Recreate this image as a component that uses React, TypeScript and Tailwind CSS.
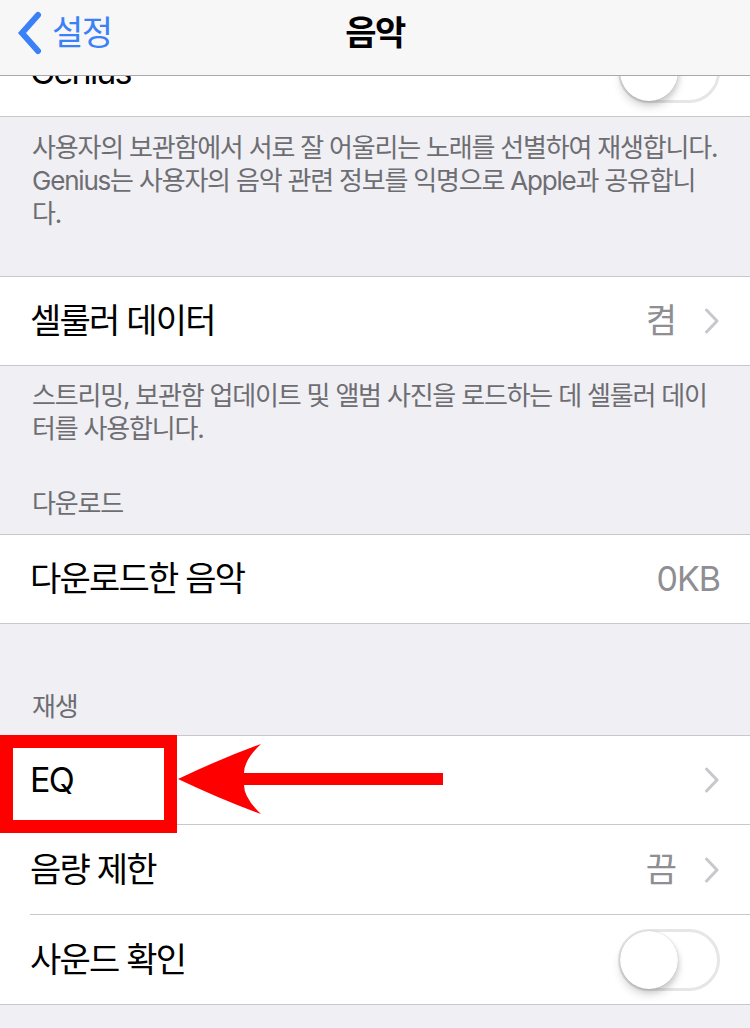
import React from "react";

const font = "font-['Inter','Noto_Sans_CJK_KR',sans-serif] [font-feature-settings:'palt']";

function Chevron() {
  return (
    <svg width="16" height="26" viewBox="0 0 16 26" className="shrink-0">
      <path d="M2.5 2 L13 13 L2.5 24" fill="none" stroke="#c7c7cc" strokeWidth="3" strokeLinecap="round" strokeLinejoin="round" />
    </svg>
  );
}

function Toggle() {
  return (
    <div className="relative w-[102px] h-[62px] rounded-full border-[3px] border-[#e6e6e6] bg-white">
      <div className="absolute left-[-1px] top-[-1px] w-[58px] h-[58px] rounded-full bg-white shadow-[0_6px_8px_rgba(0,0,0,0.15),0_0_1px_rgba(0,0,0,0.25),2px_3px_4px_rgba(0,0,0,0.08)]" />
    </div>
  );
}

function Row({ label, value, chevron, toggle, h = "h-[88px]" }: { label: string; value?: string; chevron?: boolean; toggle?: boolean; h?: string }) {
  return (
    <div className={`${h} flex items-center pl-[30px] pr-[30px] bg-white`}>
      <span className="text-[34px] leading-none text-black tracking-[-1.8px]">{label}</span>
      <div className="ml-auto flex items-center gap-[28px]">
        {value && <span className="text-[34px] leading-none text-[#8e8e93] tracking-[-1px]">{value}</span>}
        {chevron && <Chevron />}
        {toggle && <Toggle />}
      </div>
    </div>
  );
}

function Sep() {
  return (
    <div className="bg-white pl-[30px]">
      <div className="h-px bg-[#c8c7cc]" />
    </div>
  );
}

export default function App() {
  return (
    <div className={`relative w-[750px] h-[1028px] overflow-hidden bg-[#efeff4] ${font}`}>
      <div className="pt-[28px]">
        <div className="border-b border-[#c8c7cc]">
          <Row label="Genius" toggle />
        </div>
        <div className="h-[159px] px-[32px] pt-[14px] text-[26px] leading-[33px] text-[#6d6d72] whitespace-nowrap tracking-[-1.2px]">
          사용자의 보관함에서 서로 잘 어울리는 노래를 선별하여 재생합니다.
          <br />
          Genius는 사용자의 음악 관련 정보를 익명으로 Apple과 공유합니
          <br />
          다.
        </div>
        <div className="border-y border-[#c8c7cc]">
          <Row label="셀룰러 데이터" value="켬" chevron />
        </div>
        <div className="h-[168px] px-[32px] pt-[13px] text-[26px] leading-[33px] text-[#6d6d72] whitespace-nowrap tracking-[-1.2px] flex flex-col">
          <div>
            스트리밍, 보관함 업데이트 및 앨범 사진을 로드하는 데 셀룰러 데이
            <br />
            터를 사용합니다.
          </div>
          <div className="mt-auto pb-[14px]">다운로드</div>
        </div>
        <div className="border-y border-[#c8c7cc]">
          <Row label="다운로드한 음악" value="0KB" />
        </div>
        <div className="h-[111px] px-[32px] flex flex-col justify-end pb-[12px] text-[26px] leading-[33px] text-[#6d6d72] tracking-[-1.2px]">
          재생
        </div>
        <div className="border-y border-[#c8c7cc]">
          <Row label="EQ" chevron />
          <Sep />
          <Row label="음량 제한" value="끔" chevron h="h-[89px]" />
          <Sep />
          <Row label="사운드 확인" toggle h="h-[89px]" />
        </div>
      </div>

      {/* navigation bar overlay */}
      <div className="absolute top-0 left-0 right-0 h-[76px] bg-[#f7f7f7] border-b border-[#a9a9ad] flex items-center justify-center">
        <div className="absolute left-[14px] top-[8px] flex items-center h-[50px]">
          <svg width="30" height="44" viewBox="0 0 30 44">
            <path d="M24 4 L8 22 L24 40" fill="none" stroke="#3a80f6" strokeWidth="6" strokeLinecap="round" strokeLinejoin="miter" />
          </svg>
          <span className="ml-[8px] text-[34px] leading-none text-[#3a80f6] tracking-[-1.5px]">설정</span>
        </div>
        <span className="text-[34px] leading-none font-semibold text-black -mt-[10px] tracking-[-1.5px]">음악</span>
      </div>

      {/* annotation: red box and arrow */}
      <div className="absolute left-0 top-[735px] w-[177px] h-[98px] border-[13px] border-[#ff0000]" />
      <svg className="absolute left-0 top-0 pointer-events-none" width="750" height="1028" viewBox="0 0 750 1028">
        <path
          d="M178 779 Q222 758 261 744 Q244 760 244 773 L443 773 L443 785 L244 785 Q244 798 261 814 Q222 800 178 779 Z"
          fill="#ff0000"
        />
      </svg>
    </div>
  );
}
